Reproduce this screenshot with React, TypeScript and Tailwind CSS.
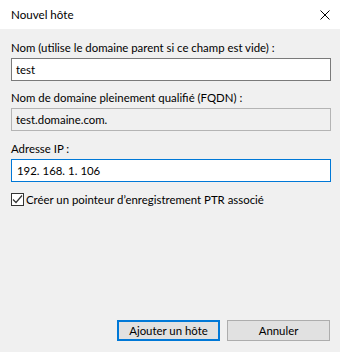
import React from 'react'

function Field({ label, value, readOnly, focused }: { label: string; value: React.ReactNode; readOnly?: boolean; focused?: boolean }) {
  const box = focused
    ? 'border-[#0078d7] bg-white'
    : readOnly
      ? 'border-[#b4b4b4] bg-[#f0f0f0]'
      : 'border-[#7a7a7a] bg-white'
  return (
    <div className="flex flex-col">
      <div className="h-[16px] leading-[16px]">{label}</div>
      <div className={`mt-[2px] h-[23px] border ${box} flex items-center pl-[4px]`}>{value}</div>
    </div>
  )
}

export default function App() {
  return (
    <div className="w-[340px] h-[352px] bg-[#f0f0f0] flex flex-col overflow-hidden font-['Lato',sans-serif] text-[11.4px] text-black">
      {/* barre de titre */}
      <div className="h-[29px] bg-white flex items-center justify-between pl-[11px] pr-[10px]">
        <span className="text-[11.6px]">Nouvel hôte</span>
        <svg width="10" height="10" viewBox="0 0 10 10">
          <path d="M0.5 0.5 L9.5 9.5 M9.5 0.5 L0.5 9.5" stroke="#000" strokeWidth="1" />
        </svg>
      </div>

      <div className="flex-1 flex flex-col pl-[11px] pr-[9px] pt-[11px]">
        <Field label="Nom (utilise le domaine parent si ce champ est vide) :" value="test" />
        <div className="mt-[9px]">
          <Field label="Nom de domaine pleinement qualifié (FQDN) :" value="test.domaine.com." readOnly />
        </div>
        <div className="mt-[10px]">
          <Field
            label="Adresse IP :"
            focused
            value={
              <span className="flex pl-[1px]">
                <span>192</span><span className="mr-[3px]">.</span>
                <span>168</span><span className="mr-[3px]">.</span>
                <span>1</span><span className="mr-[3px]">.</span>
                <span>106</span>
              </span>
            }
          />
        </div>

        <label className="mt-[9px] flex items-center gap-[2px]">
          <span className="w-[13px] h-[13px] border border-[#333] bg-white flex items-center justify-center">
            <svg width="11" height="11" viewBox="0 0 11 11">
              <path d="M1 5.5 L4 8.5 L10 1.5" fill="none" stroke="#333" strokeWidth="1.2" />
            </svg>
          </span>
          <span>Créer un pointeur d’enregistrement PTR associé</span>
        </label>

        <div className="flex-1" />

        <div className="flex justify-end gap-[7px] pr-[1px] pb-[11px]">
          <button className="w-[103px] h-[21px] border-2 border-[#0078d7] bg-[#e1e1e1] leading-none">Ajouter un hôte</button>
          <button className="w-[103px] h-[21px] border border-[#adadad] bg-[#e1e1e1] leading-none">Annuler</button>
        </div>
      </div>
    </div>
  )
}
